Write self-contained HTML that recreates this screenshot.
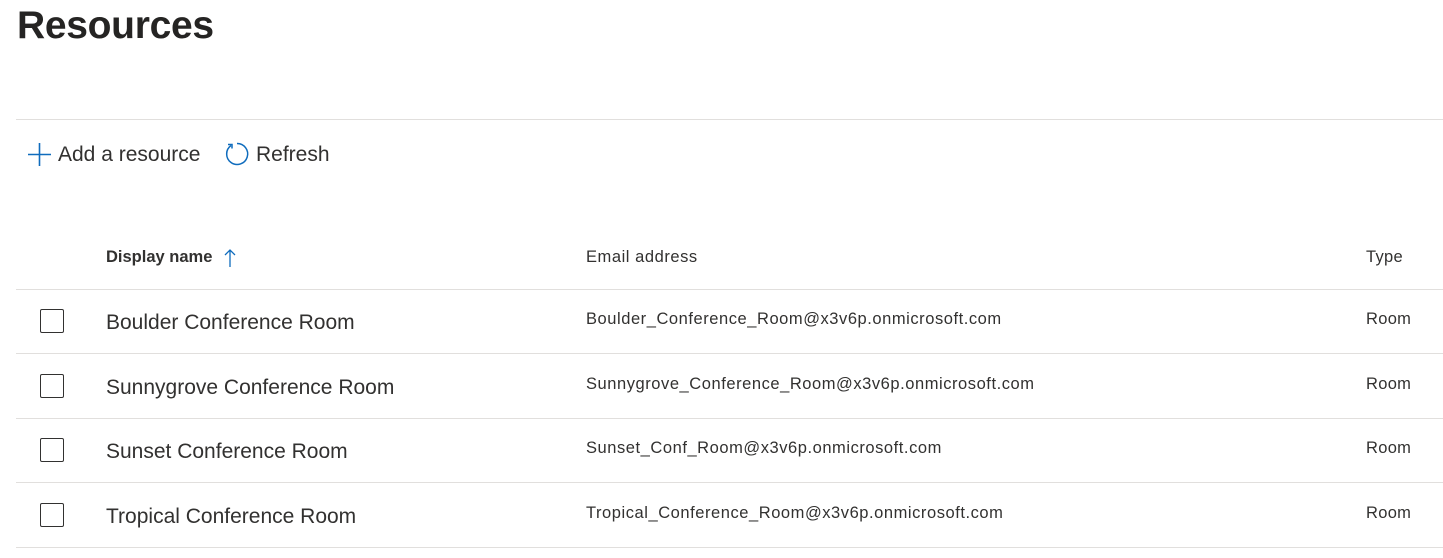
<!DOCTYPE html>
<html><head><style>
body{margin:0;width:1443px;height:558px;background:#fff;font-family:"Liberation Sans",sans-serif;color:#323130;overflow:hidden;position:relative}
.a{position:absolute;white-space:nowrap}
h1{position:absolute;left:17px;top:4px;margin:0;font-size:39px;font-weight:bold;color:#252423;letter-spacing:-0.3px}
.line{position:absolute;left:16px;right:0;height:1px;background:#e1dfdd}
.cb{position:absolute;left:40px;width:22px;height:22px;border:1px solid #323130;border-radius:2px}
.nm{position:absolute;left:106px;font-size:21px;color:#323130;white-space:nowrap}
.em{position:absolute;left:586px;font-size:16.5px;letter-spacing:0.55px;color:#323130;white-space:nowrap}
.ty{position:absolute;left:1366px;font-size:16.5px;color:#323130;letter-spacing:0.3px}
</style></head><body>
<h1>Resources</h1>
<div class="line" style="top:119px"></div>
<svg class="a" style="left:27px;top:142px" width="25" height="25"><path d="M12.5 1V24M1 12.5H24" stroke="#0f6cbd" stroke-width="1.6" fill="none"/></svg>
<div class="a" style="left:58px;top:143px;font-size:21px">Add a resource</div>
<svg class="a" style="left:224px;top:141px" width="26" height="26"><path d="M7 4.5A10.5 10.5 0 1 0 13 2.5" stroke="#0f6cbd" stroke-width="1.5" fill="none"/><path d="M4 3.5H8V7.5" stroke="#0f6cbd" stroke-width="1.5" fill="none"/></svg>
<div class="a" style="left:256px;top:143px;font-size:21px">Refresh</div>
<div class="a" style="left:106px;top:248px;font-size:16.5px;font-weight:bold;color:#323130">Display name</div>
<svg class="a" style="left:223px;top:248px" width="14" height="20"><path d="M7 2V19M2 7L7 2L12 7" stroke="#0f6cbd" stroke-width="1.3" fill="none"/></svg>
<div class="a em" style="top:248px">Email address</div>
<div class="a ty" style="top:248px">Type</div>
<div class="line" style="top:289px"></div>
<div class="cb" style="top:309px"></div><div class="nm" style="top:311px">Boulder Conference Room</div><div class="em" style="top:310px">Boulder_Conference_Room@x3v6p.onmicrosoft.com</div><div class="ty" style="top:310px">Room</div>
<div class="line" style="top:353px"></div>
<div class="cb" style="top:374px"></div><div class="nm" style="top:376px">Sunnygrove Conference Room</div><div class="em" style="top:375px">Sunnygrove_Conference_Room@x3v6p.onmicrosoft.com</div><div class="ty" style="top:375px">Room</div>
<div class="line" style="top:418px"></div>
<div class="cb" style="top:438px"></div><div class="nm" style="top:440px">Sunset Conference Room</div><div class="em" style="top:439px">Sunset_Conf_Room@x3v6p.onmicrosoft.com</div><div class="ty" style="top:439px">Room</div>
<div class="line" style="top:482px"></div>
<div class="cb" style="top:503px"></div><div class="nm" style="top:505px">Tropical Conference Room</div><div class="em" style="top:504px">Tropical_Conference_Room@x3v6p.onmicrosoft.com</div><div class="ty" style="top:504px">Room</div>
<div class="line" style="top:547px"></div>
</body></html>
